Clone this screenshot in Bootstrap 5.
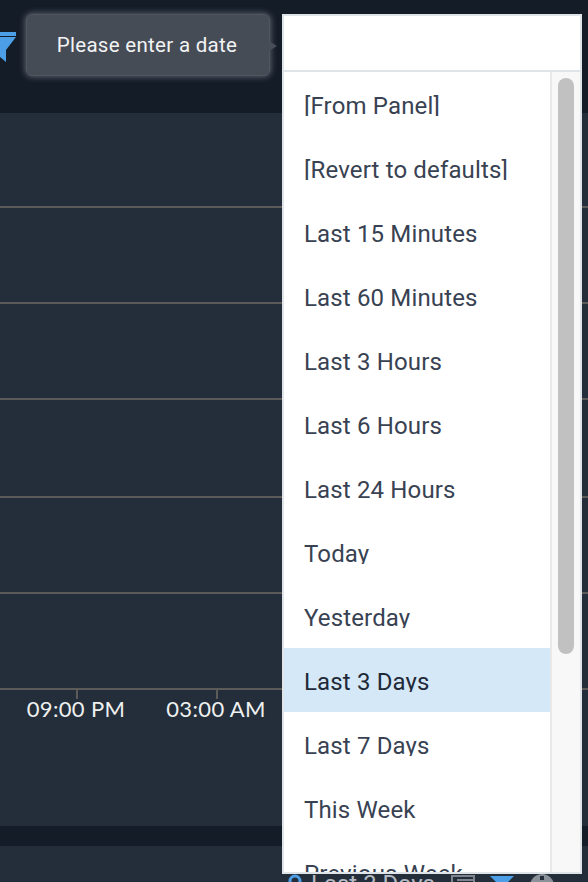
<!DOCTYPE html>
<html lang="en">
<head>
    <meta charset="UTF-8">
    <meta name="viewport" content="width=device-width, initial-scale=1.0">
    <title>Date range picker</title>
    <link rel="stylesheet" href="https://cdn.jsdelivr.net/npm/bootstrap@5.3.0/dist/css/bootstrap.min.css">
    <style>
        html, body { height: 100%; }
        body {
            background: #141c27;
            overflow: hidden;
            font-family: Roboto, "Liberation Sans", sans-serif;
        }
        .stage { width: 588px; height: 882px; overflow: hidden; }
        .top-strip { height: 113px; }
        .chart-panel { height: 713px; background: #242e3a; padding-top: 93px; }
        .grid-row { height: 96px; border-top: 2px solid #5c5b59; }
        .grid-row.tall { height: 98px; }
        .axis-row { border-top: 2px solid #5c5b59; height: 60px; position: relative; }
        .axis-tick { position: absolute; top: 0; width: 2px; height: 9px; background: #5c5b59; }
        .axis-label {
            position: absolute; top: 6px; width: 120px; text-align: center;
            font-family: Lato, "Liberation Sans", sans-serif; font-size: 22px; line-height: 26px; color: #eef0f0;
            letter-spacing: .35px;
        }
        .lower-panel { height: 36px; margin-top: 20px; background: #242e3a; }
        .filter-top { position: absolute; left: 0; top: 32px; }
        .hint-bubble {
            position: absolute; left: 26px; top: 14px; width: 244px; height: 62px;
            padding-right: 2px;
            background: #464c56; border-radius: 6px;
            border: 1px solid #50555e;
            box-shadow: 0 0 6px 1px rgba(140, 145, 155, .6);
            color: #f2f3f4; font-size: 20.5px; line-height: 60px; text-align: center;
            letter-spacing: .3px;
        }
        .hint-bubble::after {
            content: ""; position: absolute; right: -8px; top: 26px;
            border-left: 8px solid #484d57; border-top: 5px solid transparent; border-bottom: 5px solid transparent;
        }
        .picker {
            position: absolute; left: 282px; top: 14px; width: 300px; height: 860px;
            background: #fff; border: 2px solid #dfe4e9;
        }
        .picker-input { width: 100%; border: 0; border-bottom: 2px solid #dfe4e9; border-radius: 0; outline: 0; display: block; height: 56px; }
        .picker-body { height: 800px; overflow: hidden; }
        .picker-list { width: 268px; border-right: 2px solid #e9e9e9; height: 800px; overflow: hidden; }
        .picker-item {
            height: 64px; padding: 19px 0 0 21px; color: #384252;
            font-size: 24px; line-height: 30px; letter-spacing: .15px;
        }
        .picker-item > span { display: block; margin-left: -1px; height: 25px; overflow: hidden; }
        .picker-item.active-item { background: #d4e8f7; color: #1f2937; }
        .scroll-track { width: 28px; background: #f8f8f8; padding: 6px 6px 0 6px; }
        .scroll-thumb { height: 576px; background: #c1c1c1; border-radius: 8px; }
        .bottom-bits { position: absolute; left: 284px; top: 874px; width: 300px; height: 8px; overflow: hidden; }
        .bottom-text { position: absolute; left: 27px; top: -4px; color: #b4bac1; font-size: 24px; line-height: 28px; white-space: nowrap; }
    </style>
</head>
<body>
    <div class="stage position-relative">
        <div class="top-strip"></div>
        <div class="chart-panel">
            <div class="grid-row"></div>
            <div class="grid-row"></div>
            <div class="grid-row tall"></div>
            <div class="grid-row"></div>
            <div class="grid-row"></div>
            <div class="axis-row">
                <div class="axis-tick" style="left:76px"></div>
                <div class="axis-tick" style="left:216px"></div>
                <div class="axis-label" style="left:16px">09:00 PM</div>
                <div class="axis-label" style="left:156px">03:00 AM</div>
            </div>
        </div>
        <div class="lower-panel"></div>

        <svg class="filter-top" width="18" height="32" viewBox="0 0 18 32">
            <rect x="0" y="0" width="16" height="4" fill="#4c9fe6"/>
            <path d="M0 5H16L6 18V30L0 25Z" fill="#4c9fe6"/>
        </svg>

        <div class="hint-bubble">Please enter a date</div>

        <div class="bottom-bits">
            <svg class="position-absolute" style="left:4px;top:0" width="14" height="8" viewBox="0 0 14 8"><circle cx="7" cy="7" r="5" fill="none" stroke="#4c9fe6" stroke-width="3"/></svg>
            <span class="bottom-text">Last 3 Days</span>
            <svg class="position-absolute" style="left:166px;top:0" width="26" height="8" viewBox="0 0 26 8"><path d="M2 8V2H24V8M7 6H24" fill="none" stroke="#7d848d" stroke-width="2"/></svg>
            <svg class="position-absolute" style="left:206px;top:2px" width="24" height="6" viewBox="0 0 24 6"><path d="M0 0H24L18 6H6Z" fill="#4c9fe6"/></svg>
            <svg class="position-absolute" style="left:246px;top:0" width="24" height="8" viewBox="0 0 24 8"><circle cx="12" cy="12" r="12" fill="#8b9199"/><rect x="10" y="2" width="4" height="4" fill="#242e3a"/></svg>
        </div>

        <div class="picker">
            <input class="picker-input form-control" type="text">
            <div class="picker-body d-flex">
                <div class="picker-list" id="dateList"></div>
                <div class="scroll-track"><div class="scroll-thumb"></div></div>
            </div>
        </div>
    </div>
    <script src="https://cdn.jsdelivr.net/npm/bootstrap@5.3.0/dist/js/bootstrap.bundle.min.js"></script>
    <script>
        const ranges = ["[From Panel]", "[Revert to defaults]", "Last 15 Minutes", "Last 60 Minutes", "Last 3 Hours", "Last 6 Hours", "Last 24 Hours", "Today", "Yesterday", "Last 3 Days", "Last 7 Days", "This Week", "Previous Week"];
        document.getElementById("dateList").innerHTML = ranges.map(r =>
            `<div class="picker-item${r === "Last 3 Days" ? " active-item" : ""}"><span>${r}</span></div>`
        ).join("");
    </script>
</body>
</html>
